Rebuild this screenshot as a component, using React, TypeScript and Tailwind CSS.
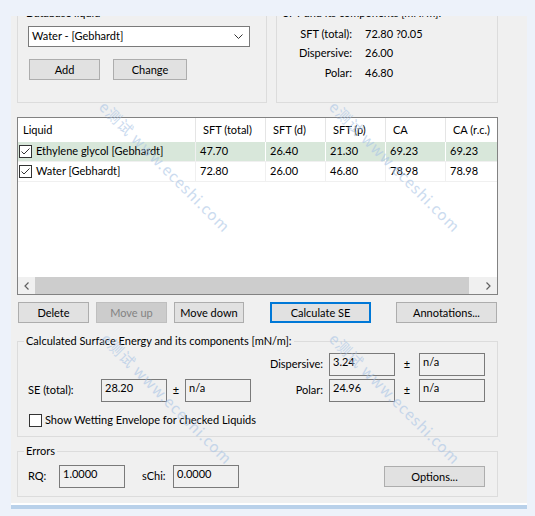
import React from "react"

type BtnProps = {
    label: string
    className?: string
    disabled?: boolean
    focused?: boolean
}

function Btn({ label, className = "", disabled = false, focused = false }: BtnProps) {
    const look = disabled
        ? "bg-[#cccccc] border border-[#bfbfbf] text-[#838383]"
        : focused
        ? "bg-[#e1e1e1] border-2 border-[#0078d7]"
        : "bg-[#e1e1e1] border border-[#adadad]"
    return (
        <button type="button" className={`h-[21px] flex items-center justify-center shrink-0 text-[11px] leading-[16px] ${look} ${className}`}>
            {label}
        </button>
    )
}

function Check({ checked = false }: { checked?: boolean }) {
    return (
        <span className="w-[13px] h-[13px] shrink-0 border border-[#333333] bg-white flex items-center justify-center">
            {checked && (
                <svg width="11" height="11" viewBox="0 0 11 11">
                    <path d="M1.5 5.5 L4 8 L9.5 2.5" stroke="#333333" strokeWidth="1" fill="none" />
                </svg>
            )}
        </span>
    )
}

function ReadBox({ value }: { value: string }) {
    return (
        <div className="w-[66px] h-[23px] shrink-0 border border-[#7a7a7a] bg-[#f0f0f0] pl-[3px] text-[11px] leading-[16px]">
            {value}
        </div>
    )
}

const columns = [
    { label: "Liquid", w: "w-[178px]" },
    { label: "SFT (total)", w: "w-[70px]" },
    { label: "SFT (d)", w: "w-[60px]" },
    { label: "SFT (p)", w: "w-[60px]" },
    { label: "CA", w: "w-[60px]" },
    { label: "CA (r.c.)", w: "w-[60px]" },
]

const rows = [
    { name: "Ethylene glycol [Gebhardt]", values: ["47.70", "26.40", "21.30", "69.23", "69.23"], selected: true },
    { name: "Water [Gebhardt]", values: ["72.80", "26.00", "46.80", "78.98", "78.98"], selected: false },
]

const watermarks = [
    "left-[110px] top-[96px]",
    "left-[340px] top-[96px]",
    "left-[112px] top-[328px]",
    "left-[340px] top-[328px]",
]

export default function App() {
    return (
        <div className="relative w-[535px] h-[516px] overflow-hidden bg-[#edf2fa] pt-[16px] pl-[11px] text-black text-[11px] font-['Lato',sans-serif]">
            <div className="w-[516px] h-[487px] bg-[#f0f0f0] overflow-hidden pl-[6px]">
                <div className="w-[481px] flex flex-col">

                    {/* top groups, scrolled partly out of view */}
                    <div className="flex gap-[9px] mt-[-11px]">
                        <fieldset className="w-[250px] h-[98px] border border-[#dcdcdc]">
                            <legend className="ml-[6px] px-[2px] leading-[16px]">Database liquid</legend>
                            <div className="px-[10px] pt-[5px]">
                                <div className="w-[222px] h-[21px] bg-white border border-[#7a7a7a] flex items-center justify-between pl-[3px] pr-[6px]">
                                    <span>Water - [Gebhardt]</span>
                                    <svg width="9" height="5" viewBox="0 0 9 5">
                                        <path d="M0.5 0.5 L4.5 4.5 L8.5 0.5" stroke="#333333" strokeWidth="1" fill="none" />
                                    </svg>
                                </div>
                                <div className="flex mt-[12px] ml-[1px]">
                                    <Btn label="Add" className="w-[71px]" />
                                    <Btn label="Change" className="w-[74px] ml-[13px]" />
                                </div>
                            </div>
                        </fieldset>
                        <fieldset className="w-[222px] h-[98px] border border-[#dcdcdc]">
                            <legend className="ml-[4px] px-[2px] leading-[16px]">SFT and its components [mN/m]:</legend>
                            <div className="pt-[3px]">
                                {[["SFT (total):", "72.80 ?0.05"], ["Dispersive:", "26.00"], ["Polar:", "46.80"]].map(([k, v]) => (
                                    <div key={k} className="flex items-center h-[19.5px]">
                                        <span className="w-[75px] shrink-0 text-right">{k}</span>
                                        <span className="ml-[13px]">{v}</span>
                                    </div>
                                ))}
                            </div>
                        </fieldset>
                    </div>

                    {/* liquids table */}
                    <div className="mt-[14px] h-[178px] border border-[#828282] bg-white flex flex-col overflow-hidden">
                        <div className="flex h-[24px] shrink-0">
                            {columns.map((c, i) => (
                                <div key={c.label} className={`${c.w} shrink-0 h-full flex items-center border-r border-[#e5e5e5] ${i === 0 ? "pl-[5px]" : "pl-[7px]"}`}>
                                    {c.label}
                                </div>
                            ))}
                        </div>
                        {rows.map((r) => (
                            <div key={r.name} className={`flex h-[20px] shrink-0 border-b border-[#f0f0f0] ${r.selected ? "bg-[#d8e7da]" : "bg-white"}`}>
                                <div className="w-[178px] shrink-0 flex items-center pl-[1px] gap-[4px] border-r border-[#f0f0f0]">
                                    <Check checked />
                                    <span>{r.name}</span>
                                </div>
                                {r.values.map((v, i) => (
                                    <div key={i} className={`${columns[i + 1].w} shrink-0 flex items-center pl-[4px] border-r ${r.selected ? "border-white" : "border-[#f0f0f0]"}`}>
                                        {v}
                                    </div>
                                ))}
                            </div>
                        ))}
                        <div className="flex-1" />
                        <div className="flex h-[17px] shrink-0 bg-[#f0f0f0]">
                            <div className="w-[17px] flex items-center justify-center">
                                <svg width="5" height="8" viewBox="0 0 5 8">
                                    <path d="M4.5 0.5 L1 4 L4.5 7.5" stroke="#606060" strokeWidth="1.2" fill="none" />
                                </svg>
                            </div>
                            <div className="w-[434px] bg-[#cdcdcd]" />
                            <div className="flex-1" />
                            <div className="w-[17px] flex items-center justify-center">
                                <svg width="5" height="8" viewBox="0 0 5 8">
                                    <path d="M0.5 0.5 L4 4 L0.5 7.5" stroke="#606060" strokeWidth="1.2" fill="none" />
                                </svg>
                            </div>
                        </div>
                    </div>

                    {/* table actions */}
                    <div className="flex mt-[7px] ml-[1px]">
                        <Btn label="Delete" className="w-[71px]" />
                        <Btn label="Move up" disabled className="w-[71px] ml-[7px]" />
                        <Btn label="Move down" className="w-[70px] ml-[7px]" />
                        <Btn label="Calculate SE" focused className="w-[101px] ml-[26px]" />
                        <Btn label="Annotations..." className="w-[101px] ml-[25px]" />
                    </div>

                    {/* calculated surface energy */}
                    <fieldset className="mt-[10px] h-[104px] border border-[#dcdcdc]">
                        <legend className="ml-[6px] px-[2px] leading-[16px]">Calculated Surface Energy and its components [mN/m]:</legend>
                        <div className="pl-[10px] pt-[4px]">
                            <div className="flex">
                                <div className="w-[223px] flex flex-col justify-end">
                                    <div className="flex items-center">
                                        <span className="w-[73px]">SE (total):</span>
                                        <ReadBox value="28.20" />
                                        <span className="w-[18px] text-center">±</span>
                                        <ReadBox value="n/a" />
                                    </div>
                                </div>
                                <div className="flex flex-col gap-[3px]">
                                    {[["Dispersive:", "3.24"], ["Polar:", "24.96"]].map(([k, v]) => (
                                        <div key={k} className="flex items-center">
                                            <span className="w-[72px] text-right">{k}</span>
                                            <span className="w-[6px]" />
                                            <ReadBox value={v} />
                                            <span className="w-[24px] text-center">±</span>
                                            <ReadBox value="n/a" />
                                        </div>
                                    ))}
                                </div>
                            </div>
                            <div className="flex items-center gap-[3px] mt-[10px] ml-[1px]">
                                <Check />
                                <span>Show Wetting Envelope for checked Liquids</span>
                            </div>
                        </div>
                    </fieldset>

                    {/* errors */}
                    <fieldset className="mt-[6px] h-[54px] border border-[#dcdcdc]">
                        <legend className="ml-[6px] px-[2px] leading-[16px]">Errors</legend>
                        <div className="flex items-start pl-[10px] pr-[12px] pt-[6px]">
                            <span className="w-[31px] h-[23px] flex items-center">RQ:</span>
                            <ReadBox value="1.0000" />
                            <span className="w-[31px] h-[23px] flex items-center ml-[17px]">sChi:</span>
                            <ReadBox value="0.0000" />
                            <Btn label="Options..." className="w-[101px] ml-auto mt-[1px]" />
                        </div>
                    </fieldset>
                </div>
            </div>
            <div className="w-[516px] h-[2px] bg-white" />
            <div className="w-[516px] h-[4px] bg-[#b9d1ea]" />

            {watermarks.map((pos) => (
                <div
                    key={pos}
                    className={`absolute ${pos} origin-top-left rotate-45 whitespace-nowrap text-[15px] tracking-[1px] text-[#a9c4e6] opacity-60 pointer-events-none font-['Noto_Sans_CJK_SC',sans-serif]`}
                >
                    e测试 www.eceshi.com
                </div>
            ))}
        </div>
    )
}
